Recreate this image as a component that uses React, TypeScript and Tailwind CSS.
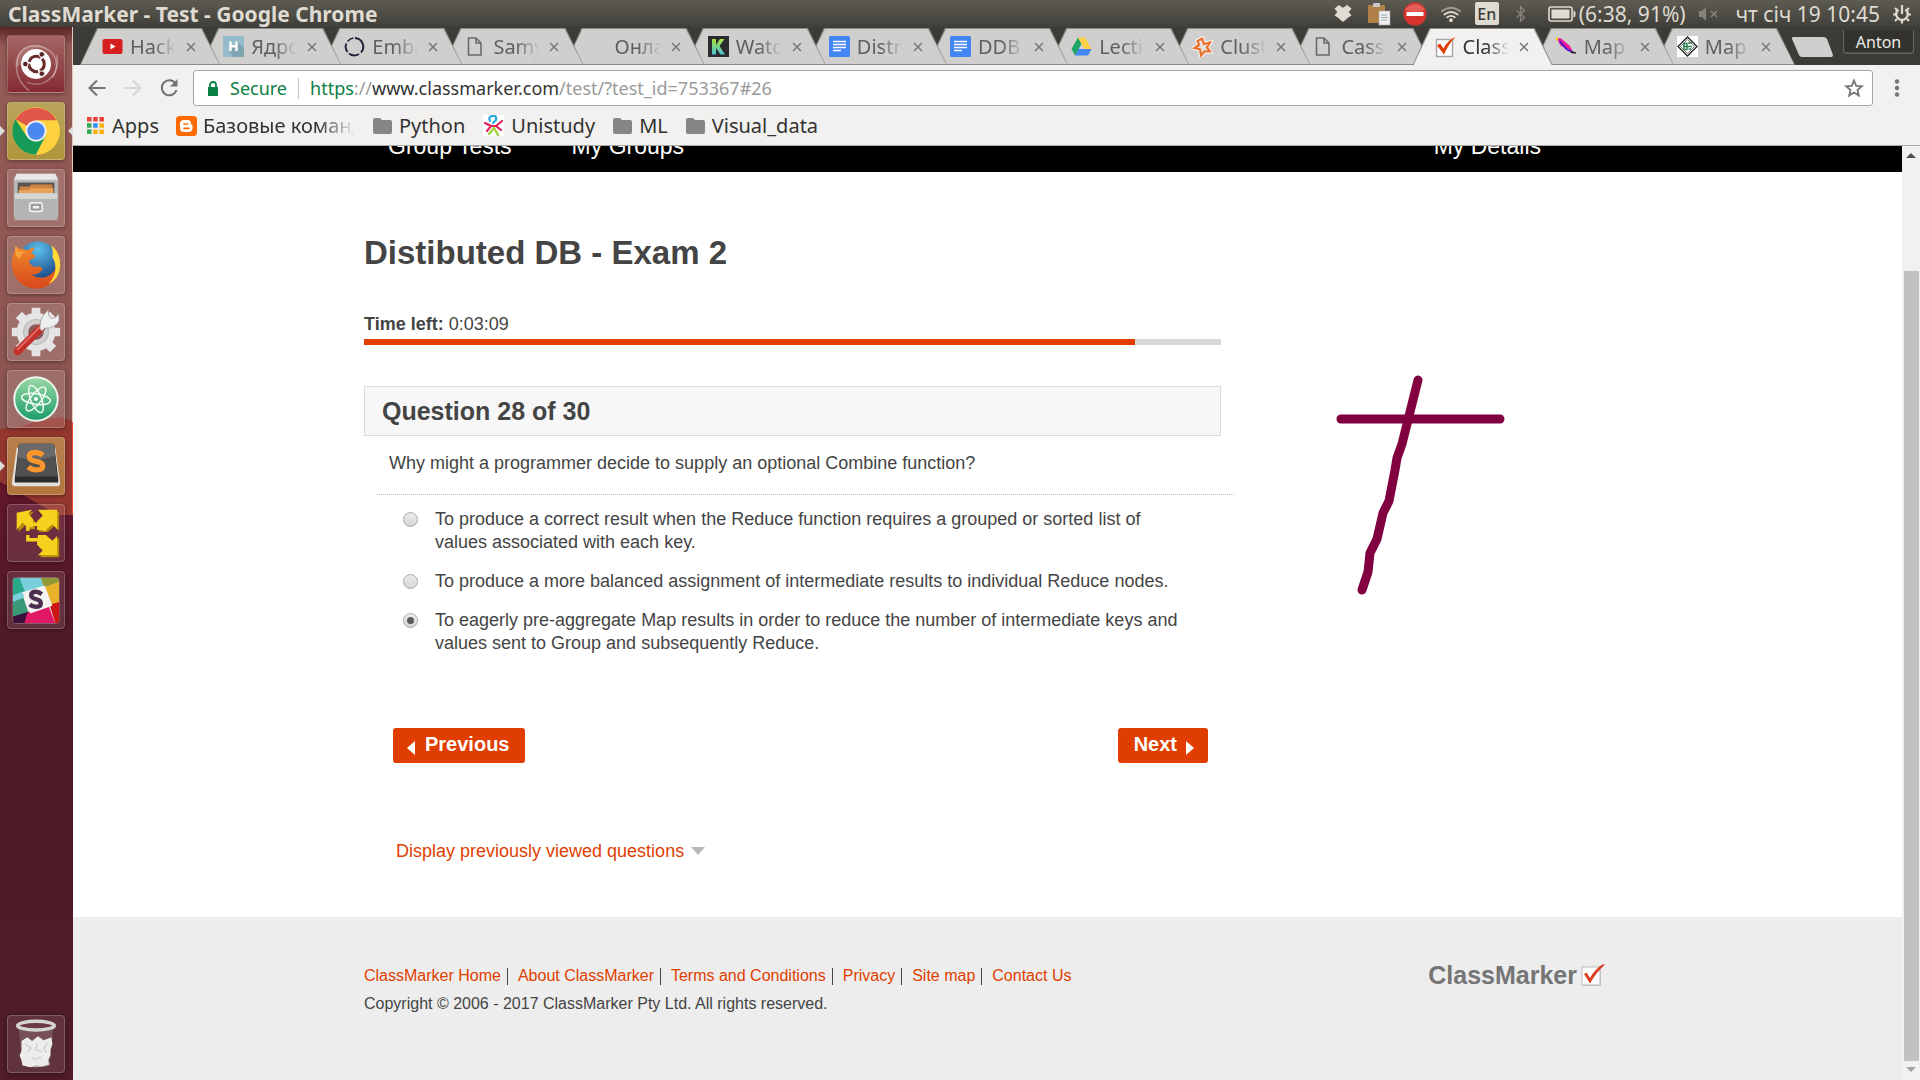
import React from "react";

const UI_FONT = "font-['Noto_Sans','Open_Sans',sans-serif]";
const PAGE_FONT = "font-['Liberation_Sans',Arial,sans-serif]";

/* ---------- favicons ---------- */

const YouTube = () => (
  <svg viewBox="0 0 21 21" className="size-[21px]">
    <rect x="0.5" y="3" width="20" height="15" rx="2" fill="#d6201f" />
    <path d="M8.500 7.500v6l5-3z" fill="#fff" />
  </svg>
);
const Habr = () => (
  <svg viewBox="0 0 21 21" className="size-[21px]">
    <rect width="21" height="21" fill="#94bccb" />
    <path d="M14 5l7 7v9H10l-3.500-6z" fill="#7fa5b3" />
    <path d="M7.500 5.500v9.500M13.500 5.500v9.500M7.500 10.200h6" stroke="#fff" strokeWidth="2.400" />
  </svg>
);
const Ring = () => (
  <svg viewBox="0 0 21 21" className="size-[21px]" fill="none" stroke="#26203a" strokeWidth="2">
    <path d="M11 2A8.700 8.700 0 0 1 17 16.500" />
    <path d="M15 18A8.700 8.700 0 0 1 5 17.500M3.500 16A8.700 8.700 0 0 1 2.300 7.500" />
    <path d="M3.500 5.500A8.700 8.700 0 0 1 9.500 2" strokeWidth="1.300" />
  </svg>
);
const FileIcon = () => (
  <svg viewBox="0 0 21 21" className="size-[21px]" fill="none" stroke="#6b6b6b" strokeWidth="1.600">
    <path d="M3.500 2h7.500l5 5v12h-12.500zM11 2v5h5" />
  </svg>
);
const Blank = () => <span className="block size-[21px]" />;
const KIcon = () => (
  <svg viewBox="0 0 21 21" className="size-[21px]">
    <defs>
      <linearGradient id="kg" x1="0" y1="0" x2="0" y2="1">
        <stop offset="0" stopColor="#a6e23a" />
        <stop offset="1" stopColor="#4cc4d8" />
      </linearGradient>
    </defs>
    <rect width="21" height="21" fill="#2b2b2f" />
    <path d="M4 3h4v6l4-6h4.500l-5 7 5.500 8.500h-4.500L8 12v6.500H4z" fill="url(#kg)" />
  </svg>
);
const Docs = () => (
  <svg viewBox="0 0 21 21" className="size-[21px]">
    <rect width="21" height="21" rx="1.500" fill="#4285f4" />
    <path d="M4 5.500h13M4 8.500h13M4 11.500h13M4 14.500h8" stroke="#fff" strokeWidth="1.500" />
  </svg>
);
const Drive = () => (
  <svg viewBox="0 0 21 21" className="size-[21px]">
    <path d="M7 1.500L0.500 13l3.500 6.500L10.500 8z" fill="#1fa463" />
    <path d="M7 1.500h7L20.500 13h-7z" fill="#ffcf44" />
    <path d="M7.500 13H20.500L17 19.500H4z" fill="#4285f4" />
  </svg>
);
const StarFav = () => (
  <svg viewBox="0 0 21 21" className="size-[21px]">
    <path d="M10 2.500l2 5.500 6-1.500-3 5 3 4-5.500 0-3.500 4-1-6-5.500-1.500 4.500-3L5.500 5z" fill="none" stroke="#fff" strokeWidth="4" />
    <path d="M10 2.500l2 5.500 6-1.500-3 5 3 4-5.500 0-3.500 4-1-6-5.500-1.500 4.500-3L5.500 5z" fill="#e6e0da" stroke="#e8702a" strokeWidth="2.200" />
  </svg>
);
const CheckFav = () => (
  <svg viewBox="0 0 21 21" className="size-[21px]">
    <rect x="1.500" y="2.500" width="16" height="17" fill="#fff" stroke="#a8a8a8" strokeWidth="1.500" />
    <path d="M2 8.500l3-2 3.500 5C11 7 15 2 20.500 0 15.500 5 12 10.500 9 17.500z" fill="#e03e00" />
  </svg>
);
const Feather = () => (
  <svg viewBox="0 0 21 21" className="size-[21px]">
    <path d="M1 2l4 .500 8.500 7 4 7-5.500-2L4 9z" fill="#f0189a" />
    <path d="M3.500 5l7 8 7 4" fill="none" stroke="#3a1bd6" strokeWidth="1.600" />
    <path d="M1 4.500V1" stroke="#e8d22a" strokeWidth="2" />
    <path d="M15 16l5 1" stroke="#222" strokeWidth="1.600" />
  </svg>
);
const DiamondFav = () => (
  <svg viewBox="0 0 21 21" className="size-[21px]">
    <rect width="21" height="21" fill="#fff" />
    <path d="M10.500 1L20 10.500 10.500 20 1 10.500z" fill="none" stroke="#222" strokeWidth="1.300" />
    <path d="M10.500 3.500l7 7-7 7-7-7z" fill="none" stroke="#555" strokeWidth=".8" />
    <path d="M7 7.500h3v6H7zM11 7h4M11.500 10.500h3.500M11.500 13h2.500M6 10.500h9" fill="none" stroke="#2d7d4f" strokeWidth="1.400" />
  </svg>
);

type Tab = { title: string; icon: React.ReactNode; active?: boolean; layer: string };
const tabs: Tab[] = [
  { title: "Hackathon", icon: <YouTube />, layer: "z-[14]" },
  { title: "Ядроид", icon: <Habr />, layer: "z-[13]" },
  { title: "Embed", icon: <Ring />, layer: "z-[12]" },
  { title: "Samyi", icon: <FileIcon />, layer: "z-[11]" },
  { title: "Онлай", icon: <Blank />, layer: "z-[10]" },
  { title: "Watch", icon: <KIcon />, layer: "z-[9]" },
  { title: "Distrib", icon: <Docs />, layer: "z-[8]" },
  { title: "DDB", icon: <Docs />, layer: "z-[7]" },
  { title: "Lectio", icon: <Drive />, layer: "z-[6]" },
  { title: "Cluste", icon: <StarFav />, layer: "z-[5]" },
  { title: "Cassa", icon: <FileIcon />, layer: "z-[4]" },
  { title: "ClassM", icon: <CheckFav />, active: true, layer: "z-[20]" },
  { title: "Map", icon: <Feather />, layer: "z-[3]" },
  { title: "Map", icon: <DiamondFav />, layer: "z-[2]" },
];

function TabItem({ tab }: { tab: Tab }) {
  const shape = "[clip-path:polygon(17px_0,calc(100%-18px)_0,100%_100%,0_100%)]";
  return (
    <div role="tab" aria-selected={!!tab.active} className={`relative -mr-[19px] h-[37px] min-w-0 flex-1 bg-[#8d8c8a] px-px pt-px last:mr-0 ${shape} ${tab.layer} ${tab.active ? "" : "pb-px"}`}>
      <div className={`flex h-full items-center pl-[21px] ${shape} ${tab.active ? "bg-[#f2f1f0]" : "bg-[#d1cfcd]"}`}>
        {tab.icon}
        <span className={`ml-[7px] w-[46px] overflow-hidden whitespace-nowrap text-xl leading-[26px] [mask-image:linear-gradient(to_right,black_50%,transparent)] ${tab.active ? "text-[#333]" : "text-[#5f5f5f]"}`}>{tab.title}</span>
        <button aria-label="Close tab" className="ml-2 shrink-0">
          <svg viewBox="0 0 14 14" className="size-[14px]" stroke="#777" strokeWidth="1.500">
            <path d="M3 3l8 8M11 3l-8 8" />
          </svg>
        </button>
      </div>
    </div>
  );
}

/* ---------- system panel ---------- */

function TopPanel() {
  return (
    <header className="flex h-[27px] shrink-0 items-center bg-linear-to-b from-[#5d5b51] to-[#403f3a] px-2 text-[21px] leading-[26px] text-[#dfdbd2]">
      <h1 className="font-bold">ClassMarker - Test - Google Chrome</h1>
      <div className="ml-auto flex items-center">
        <svg viewBox="0 0 20 20" className="h-[19px] w-5" fill="#dfdbd2">
          <path d="M5.500 1L10 4l4.500-3L19 5l-3 3.500 3 3.500-3 2-6 5-6-5-3-2 3-3.500L1 5z" />
        </svg>
        <svg viewBox="0 0 24 24" className="ml-[14px] size-6">
          <rect x="1" y="3" width="17" height="18" rx="1" fill="#b08048" />
          <rect x="6" y="1" width="7" height="4" rx="1" fill="#c9c9c9" />
          <rect x="12" y="9" width="11" height="14" fill="#eee" stroke="#aaa" strokeWidth=".6" />
          <path d="M14 13h6M14 15.500h7M14 18h6" stroke="#9aa" strokeWidth="1.200" />
        </svg>
        <svg viewBox="0 0 24 24" className="ml-3 size-6">
          <circle cx="12" cy="12" r="11.500" fill="#d8322c" />
          <path d="M2 8a11 10 0 0 1 20 0q-10 4-20 0z" fill="#e8706a" opacity=".7" />
          <rect x="3.500" y="10" width="17" height="4" fill="#fff" />
        </svg>
        <svg viewBox="0 0 24 20" className="ml-3 h-[19px] w-6" fill="none" stroke="#dfdbd2" strokeWidth="2" strokeLinecap="round">
          <path d="M2.500 7.500q9.500-7 19 0" strokeOpacity=".55" />
          <path d="M5 11q7-5 14 0M8 14q4-3 8 0" />
          <circle cx="12" cy="17" r="1" fill="#dfdbd2" />
        </svg>
        <span className="ml-3 grid h-[23px] w-6 place-items-center rounded-xs bg-[#dfdbd2] text-base font-medium leading-none text-[#3c3b37]">En</span>
        <svg viewBox="0 0 14 20" className="ml-4 h-[18px] w-3" fill="none" stroke="#85837b" strokeWidth="1.500">
          <path d="M2 6l9 8-4.500 4.500V1.500L11 6l-9 8" />
        </svg>
        <svg viewBox="0 0 28 16" className="ml-[21px] h-4 w-7">
          <rect x="1" y="1" width="23" height="14" rx="2" fill="none" stroke="#dfdbd2" strokeWidth="1.600" />
          <rect x="3.500" y="3.500" width="18" height="9" fill="#dfdbd2" />
          <path d="M25.500 4.500q2 0 2 3.500t-2 3.500z" fill="#dfdbd2" />
        </svg>
        <span className="ml-[3px]">(6:38, 91%)</span>
        <svg viewBox="0 0 22 16" className="ml-3 h-4 w-[22px]" fill="#85837b">
          <path d="M1 5h3l4-4v14l-4-4H1z" />
          <path d="M13 5l6 6M19 5l-6 6" stroke="#85837b" strokeWidth="1.600" />
        </svg>
        <span className="ml-4">чт січ 19 10:45</span>
        <svg viewBox="0 0 20 20" className="ml-3 size-5" fill="none" stroke="#dfdbd2">
          <path d="M6.500 5.500a5.800 5.800 0 1 0 7 0" strokeWidth="2.400" />
          <path d="M10 1v9" strokeWidth="2.200" />
          <path d="M1 10.500h3M16 10.500h3M3 17l2-2M17 17l-2-2M3 4l2 2M17 4l-2 2M10 16v3.500" strokeWidth="2.200" />
        </svg>
      </div>
    </header>
  );
}

/* ---------- launcher ---------- */

const ubuntuIcon = (
  <svg viewBox="0 0 58 58" className="size-full">
    <g fill="none" stroke="#fff" strokeOpacity=".35" strokeWidth="1.500">
      <path d="M10 32C6 12 30 2 46 18c6 8 5 18 0 25M22 57C6 44 6 26 14 16" />
      <path d="M50 20c6 16-10 36-30 28" />
    </g>
    <path d="M8 30C6 12 28 2 44 16 30 8 14 14 14 30z" fill="#fff" opacity=".15" />
    <circle cx="29" cy="29" r="15.500" fill="#fff" />
    <circle cx="29.500" cy="29" r="8" fill="none" stroke="#6b2a2a" strokeWidth="3.200" strokeDasharray="14.700 2" strokeDashoffset="6" />
    <g fill="#5a2226" stroke="#fff" strokeWidth="1">
      <circle cx="18" cy="29" r="2.900" />
      <circle cx="35" cy="19" r="2.900" />
      <circle cx="35" cy="39" r="2.900" />
    </g>
  </svg>
);
const chromeIcon = (
  <svg viewBox="0 0 58 58" className="size-full">
    <circle cx="29" cy="29" r="24.500" fill="#fdd23e" />
    <path d="M29 29L7.800 16.800A24.500 24.500 0 0 1 50.500 18H29z" fill="#e0574a" />
    <path d="M7.800 16.800A24.500 24.500 0 0 0 29 53.500L39 35 19 34z" fill="#159a58" />
    <path d="M51 18H29v6l10 10-10 19.500A24.500 24.500 0 0 0 51 18z" fill="#fdd23e" />
    <circle cx="29" cy="29" r="11" fill="#eef1f4" />
    <circle cx="29" cy="29" r="9" fill="#4a88f0" />
  </svg>
);
const filesIcon = (
  <svg viewBox="0 0 58 58" className="size-full">
    <path d="M9 4h40l3 6v39H6V10z" fill="#b9b9b9" />
    <path d="M9 4h40l3 6H6z" fill="#e8e8e8" />
    <rect x="10" y="13" width="38" height="14" fill="#5b5450" />
    <path d="M12 17h10l2-2h22v10H12z" fill="#cf8440" />
    <path d="M11 21h10l2-2h24v6H11z" fill="#e9a45c" />
    <path d="M7 24h44v28H7z" fill="#b4b4b4" />
    <path d="M7 24h44v6H7z" fill="#d6d6d6" />
    <rect x="22.500" y="34" width="13" height="9" rx="2" fill="#aaa" stroke="#f4f4f4" strokeWidth="1.500" />
    <rect x="25" y="36.500" width="8" height="4" fill="#eee" stroke="#888" />
  </svg>
);
const firefoxIcon = (
  <svg viewBox="0 0 58 58" className="size-full">
    <defs>
      <radialGradient id="fxb" cx=".5" cy=".2" r=".8">
        <stop offset="0" stopColor="#5cc0ec" />
        <stop offset="1" stopColor="#123a7c" />
      </radialGradient>
      <linearGradient id="fxo" x1="0" y1="0" x2="0" y2="1">
        <stop offset="0" stopColor="#f08a2c" />
        <stop offset="1" stopColor="#d9481c" />
      </linearGradient>
    </defs>
    <circle cx="31" cy="26" r="21.500" fill="url(#fxb)" />
    <path d="M8 9q3 4 7 3l5 2q4-3 8-3l-4 6q5 1 4 4l-6 3q0 6 7 7 4-2 7 2-4 7-12 6 14 8 24-4 6-8 0-18-1-6-4-9 10 6 10 20A25 25 0 0 1 4 29Q4 19 7 15z" fill="url(#fxo)" />
    <path d="M45 9q10 8 9 22-1 12-12 18 8-9 7-18 0-6-3-10 1-6-1-12z" fill="#ffd83c" />
    <path d="M8 9l3 6 8 0q-6 2-7 8-6-4-4-14z" fill="#f9a13b" />
  </svg>
);
const toolsIcon = (
  <svg viewBox="0 0 58 58" className="size-full">
    <g fill="#e4e4e4">
      <circle cx="29" cy="29" r="20" />
      <g stroke="#e4e4e4" strokeWidth="9">
        <path d="M29 4v50M4 29h50M11.300 11.300l35.400 35.400M46.700 11.300L11.300 46.700" />
      </g>
    </g>
    <circle cx="29" cy="29" r="13" fill="#d0d0d0" stroke="#b5b5b5" />
    <circle cx="29" cy="29" r="8" fill="#8c5a56" />
    <path d="M10 49L35 24" stroke="#c2302c" strokeWidth="8" strokeLinecap="round" />
    <path d="M10 47L33 24" stroke="#e86a62" strokeWidth="2" strokeLinecap="round" />
    <path d="M33 25q0-9 5-15l4-4q-1 7 3 9 5 0 7-5 3 8-3 12-5 4-11 3l-3 3z" fill="#efefef" stroke="#999" strokeWidth=".8" />
  </svg>
);
const atomIcon = (
  <svg viewBox="0 0 58 58" className="size-full">
    <defs>
      <linearGradient id="atg" x1="0" y1="0" x2="0" y2="1">
        <stop offset="0" stopColor="#9ad9a4" />
        <stop offset="1" stopColor="#189c6a" />
      </linearGradient>
    </defs>
    <circle cx="29" cy="29" r="22.500" fill="url(#atg)" stroke="#eef5ef" strokeWidth="2" />
    <g fill="none" stroke="#effaf2" strokeWidth="1.600">
      <ellipse cx="29" cy="29" rx="15" ry="5.500" transform="rotate(8 29 29)" />
      <ellipse cx="29" cy="29" rx="15" ry="5.500" transform="rotate(68 29 29)" />
      <ellipse cx="29" cy="29" rx="15" ry="5.500" transform="rotate(128 29 29)" />
    </g>
    <circle cx="29" cy="29" r="2" fill="#fff" />
  </svg>
);
const sublimeIcon = (
  <svg viewBox="0 0 58 58" className="size-full">
    <path d="M9 10h40l5 36q0 4-3 4H7q-3 0-3-4z" fill="#e4e0da" />
    <path d="M11 8q0-2 3-2h31q3 0 3 2l4 34v4H7v-4z" fill="#2c2c2c" />
    <path d="M11 8q0-2 3-2h31q3 0 3 2l3 32H8z" fill="#505050" />
    <path d="M14 6h31q3 0 3 2l1 10Q30 26 10 20l1-12q0-2 3-2z" fill="#7a7a7a" opacity=".6" />
    <path d="M36 18q-3-3-8-3-6 0-6 4.500 0 3.500 6 4.500 8 1 8 5t-7 4q-5 0-8-3" fill="none" stroke="#fa962c" strokeWidth="5.500" />
  </svg>
);
const arrowsIcon = (
  <svg viewBox="0 0 58 58" className="size-full">
    <g fill="#b58a08" transform="translate(2 2)">
      <path d="M9 8l16-3-4 4 5 6v8h-6l-3-5-8 8z" />
      <path d="M31 5h20v20l-5-5-7 6h-9v-9l6-6z" />
      <path d="M31 31h8l7 6 5-5v20H31l5-5-6-6z" />
    </g>
    <g fill="#f6d21f">
      <path d="M9 8l16-3-4 4 5 6v8h-6l-5-5-6 8z" />
      <path d="M31 5h20v20l-5-5-7 6h-9v-9l6-6z" />
      <path d="M31 31h8l7 6 5-5v20H31l5-5-6-6z" />
    </g>
    <path d="M26 20h5M26 36h5M20.500 20v7M38 25v2M38 31v3M20.500 31v5h7" fill="none" stroke="#f6d21f" strokeWidth="3.500" />
  </svg>
);
const slackIcon = (
  <svg viewBox="0 0 58 58" className="size-full">
    <clipPath id="slc"><rect x="5" y="6" width="48" height="47" rx="3" /></clipPath>
    <g clipPath="url(#slc)">
      <rect width="58" height="58" fill="#f5f2f2" />
      <path d="M5 6h9l6 15-15 6z" fill="#2aa88c" />
      <path d="M12 6h22l3 9-19 7z" fill="#79cfdc" />
      <path d="M34 6h19v5l-16 5z" fill="#8f9a36" />
      <path d="M37 16l16-6v22l-9 3z" fill="#e8b228" />
      <path d="M5 27l10-3 7 20-17 6z" fill="#3a9a78" />
      <path d="M5 46l17-5v12H5z" fill="#3a0f3c" />
      <path d="M20 42l22-7 7 18H17z" fill="#e01765" />
      <path d="M43 34l10-3v22h-4z" fill="#cc1414" />
      <path d="M5 24l11-4 2 6-13 5z" fill="#79cfdc" />
      <path d="M15 21l23-7 8 21-23 8z" fill="#f5f2f2" />
    </g>
    <path d="M35 23q-3-2.500-6-2.500-5 0-5 3.500 0 3 5 4t5 4.500-5.500 3.500q-3.500 0-6-2.500" fill="none" stroke="#4c2f4f" strokeWidth="4.500" />
  </svg>
);
const trashIcon = (
  <svg viewBox="0 0 58 58" className="size-full">
    <path d="M11 12h36l-4 38q-14 5-28 0z" fill="#fff" fillOpacity=".14" />
    <path d="M15 48q14 6 28 0l0 3q-14 4-28 0z" fill="#b9b9ae" />
    <path d="M14 26l6-4 5 4 6-5 6 4 8-3 1 7-2 6 0 6-2 4 0 5-7 2-6-1-6 2-8-2-1-5-2-5 2-5z" fill="#ececec" />
    <path d="M18 29l6 4-4 5M30 28l-1 7 6 2M41 28l-4 5 3 5M24 43l5 2 5-3" fill="none" stroke="#c9c9c9" strokeWidth="1.200" />
    <ellipse cx="29" cy="10" rx="19" ry="4.500" fill="#6b3a42" stroke="#d4d6cf" strokeWidth="3.500" />
  </svg>
);

const plainTile = "bg-white/15";
const apps = [
  { name: "Search your computer", icon: ubuntuIcon, tile: "bg-linear-to-b from-[#a36765] to-[#842a33]" },
  { name: "Google Chrome", icon: chromeIcon, tile: "bg-linear-to-b from-[#b8a45c] to-[#b0963a]", left: true, right: true },
  { name: "Files", icon: filesIcon, tile: plainTile },
  { name: "Firefox", icon: firefoxIcon, tile: plainTile },
  { name: "System Settings", icon: toolsIcon, tile: plainTile },
  { name: "Atom", icon: atomIcon, tile: plainTile },
  { name: "Sublime Text", icon: sublimeIcon, tile: "bg-linear-to-b from-[#b97f4c] to-[#b2763c]", left: true },
  { name: "VMware", icon: arrowsIcon, tile: "bg-white/10" },
  { name: "Slack", icon: slackIcon, tile: "bg-white/10" },
];

function LauncherItem({ name, icon, tile, left, right }: { name: string; icon: React.ReactNode; tile: string; left?: boolean; right?: boolean }) {
  return (
    <div className="relative flex pl-[7px]">
      {left && <span className="absolute top-1/2 left-0 -mt-[5px] border-y-[5px] border-l-[5px] border-y-transparent border-l-[#dedede]" />}
      <button aria-label={name} className={`size-[58px] overflow-hidden rounded-[4px] border border-white/20 shadow-[0_1px_4px_rgba(0,0,0,0.4)] ${tile}`}>{icon}</button>
      {right && <span className="absolute top-1/2 right-0 -mt-[5px] border-y-[5px] border-r-[5px] border-y-transparent border-r-[#dedede]" />}
    </div>
  );
}

function Launcher() {
  return (
    <aside className="relative flex w-[73px] shrink-0 flex-col bg-[#8f5853] pt-2 pb-[7px]">
      <svg viewBox="0 0 73 1053" preserveAspectRatio="none" className="absolute inset-0 size-full">
        <defs>
          <linearGradient id="lg1" x1="0" y1="0" x2="0" y2="1">
            <stop offset="0" stopColor="#5a2320" />
            <stop offset=".04" stopColor="#955c57" />
            <stop offset="1" stopColor="#8a524e" />
          </linearGradient>
          <linearGradient id="lg2" x1="0" y1="0" x2="0" y2="1">
            <stop offset="0" stopColor="#63162b" />
            <stop offset=".3" stopColor="#4c1a27" />
            <stop offset="1" stopColor="#4f1c28" />
          </linearGradient>
        </defs>
        <rect width="73" height="460" fill="url(#lg1)" />
        <path d="M0 402L20 400 40 393 60 390 73 394V490H0z" fill="#95372f" />
        <path d="M0 455L14 462 40 478 60 488 73 488V1053H0z" fill="url(#lg2)" />
        <path d="M72.500 0V395" stroke="#eac7bd" />
        <path d="M72.500 395V488" stroke="#e6493a" />
      </svg>
      <nav aria-label="Launcher" className="flex flex-1 flex-col gap-[9px]">
        {apps.map((a) => <LauncherItem key={a.name} {...a} />)}
        <div className="mt-auto"><LauncherItem name="Trash" icon={trashIcon} tile="bg-white/10" /></div>
      </nav>
    </aside>
  );
}

/* ---------- browser chrome ---------- */

const Folder = () => (
  <svg viewBox="0 0 19 16" className="h-4 w-[19px]" fill="#858585">
    <path d="M0 2q0-2 2-2h5l2 2h8q2 0 2 2v10q0 2-2 2H2q-2 0-2-2z" />
  </svg>
);
const AppsGrid = () => (
  <svg viewBox="0 0 17 17" className="size-[17px]">
    <path d="M0 0h4.500v4.500H0zM6.200 0h4.500v4.500H6.200zM12.400 0h4.500v4.500h-4.500z" fill="#ea4335" />
    <path d="M0 6.200h4.500v4.500H0z" fill="#34a853" />
    <path d="M6.200 6.200h4.500v4.500H6.200z" fill="#2f8ff0" />
    <path d="M12.400 6.200h4.500v4.500h-4.500zM6.200 12.400h4.500v4.500H6.200zM12.400 12.400h4.500v4.500h-4.500z" fill="#fbaf0a" />
    <path d="M0 12.400h4.500v4.500H0z" fill="#34a853" />
  </svg>
);
const Blogger = () => (
  <svg viewBox="0 0 21 20" className="h-5 w-[21px]">
    <rect width="21" height="20" rx="3.500" fill="#ff6a00" />
    <path d="M8 4h3.500q3.500 0 3.500 3.500 0 1.500 1.500 1.500v3q0 4-4 4H8q-4 0-4-4V8Q4 4 8 4z" fill="#fff" />
    <path d="M8 8h3.500M8 12.300h5" stroke="#ff6a00" strokeWidth="1.700" strokeLinecap="round" />
  </svg>
);
const Unistudy = () => (
  <svg viewBox="0 0 21 21" className="size-[21px]" fill="none" strokeWidth="2.200" strokeLinecap="round">
    <rect width="21" height="21" fill="#fff" />
    <path d="M7 6q-2-4 2-5 5-1 4 4l-3 3" stroke="#27a9e0" />
    <path d="M2 8l6 3-4 5M19 6l-6 5 5 4" stroke="#e0245e" />
    <path d="M6 19l5-6 4 7" stroke="#a6ce39" />
    <path d="M8 11h5" stroke="#e0245e" />
  </svg>
);

const bookmarks = [
  { label: "Apps", icon: <AppsGrid />, text: "ml-2", gap: "" },
  { label: "Базовые команды", icon: <Blogger />, text: "ml-1.5 w-[152px] overflow-hidden [mask-image:linear-gradient(to_right,black_75%,transparent)]", gap: "ml-[17px]" },
  { label: "Python", icon: <Folder />, text: "ml-[7px]", gap: "ml-[18px]" },
  { label: "Unistudy", icon: <Unistudy />, text: "ml-[7px]", gap: "ml-[18px]" },
  { label: "ML", icon: <Folder />, text: "ml-[7px]", gap: "ml-[18px]" },
  { label: "Visual_data", icon: <Folder />, text: "ml-[7px]", gap: "ml-[18px]" },
];

function BrowserChrome() {
  return (
    <div className="shrink-0">
      <div className="flex h-[38px] bg-[#3c3b37] pt-px pl-[7px]">
        <div role="tablist" className="flex min-w-0 flex-1">
          {tabs.map((t, i) => <TabItem key={i} tab={t} />)}
        </div>
        <button aria-label="New tab" className="mt-[9px] -ml-[3px] h-5 w-[42px]">
          <svg viewBox="0 0 42 20" className="h-full w-full">
            <path d="M1 0h30q3 0 4 2l6 16q0 2-2 2H10q-2 0-3-2L0 2q0-2 1-2z" fill="#d1cfcd" />
          </svg>
        </button>
        <button className="mt-0.5 mr-1.5 ml-[9px] h-6 w-[71px] rounded-b-[4px] border border-t-0 border-[#66655f] bg-[#33322f] text-base leading-5 text-[#eceae6] shadow-[inset_0_-1px_0_#4d4c47]">Anton</button>
      </div>
      <div className="border-b border-[#a9a9a7] bg-[#f2f1f0]">
        <div className="flex items-center pt-[5px] pr-5 pl-[14px]">
          <button aria-label="Back"><svg viewBox="0 0 20 18" className="h-[18px] w-5" fill="none" stroke="#737373" strokeWidth="2"><path d="M18.500 9H2.500M10 1.500L2.500 9l7.500 7.500" /></svg></button>
          <button aria-label="Forward" className="ml-4"><svg viewBox="0 0 20 18" className="h-[18px] w-5" fill="none" stroke="#d6d5d4" strokeWidth="2"><path d="M1.500 9h16M10 1.500L17.500 9 10 16.500" /></svg></button>
          <button aria-label="Reload" className="ml-4"><svg viewBox="0 0 20 20" className="size-5" fill="none" stroke="#737373" strokeWidth="2"><path d="M16.500 5.500A7.500 7.500 0 1 0 17.500 12" /><path d="M18.500 1v7.500H11z" fill="#737373" stroke="none" /></svg></button>
          <div className="ml-3.5 flex h-9 min-w-0 flex-1 items-center rounded-[3px] border border-[#a6a6a6] bg-white pr-2 pl-[13px] text-lg leading-6">
            <svg viewBox="0 0 12 15" className="h-[15px] w-3" fill="#0b8043"><path d="M1 6h10v9H1z" /><path d="M3 6.500V4a3 3 0 0 1 6 0v2.500" fill="none" stroke="#0b8043" strokeWidth="1.800" /></svg>
            <span className="ml-[11px] text-[#0b8043]">Secure</span>
            <span className="ml-[11px] h-[21px] w-px bg-[#c4c4c4]" />
            <div className="ml-[11px] flex-1 truncate text-[#9a9a9a]"><span className="text-[#0b8043]">https</span>://<span className="text-[#333]">www.classmarker.com</span>/test/?test_id=753367#26</div>
            <button aria-label="Bookmark this page"><svg viewBox="0 0 20 20" className="size-5" fill="none" stroke="#757575" strokeWidth="1.800"><path d="M10 2.500l2.200 5.300 5.600.5-4.300 3.700 1.300 5.600-4.800-3-4.800 3 1.300-5.600L2.200 8.300l5.600-.5z" /></svg></button>
          </div>
          <button aria-label="Menu" className="ml-[21px]"><svg viewBox="0 0 6 18" className="h-[18px] w-1.5" fill="#757575"><circle cx="3" cy="2.500" r="2.200" /><circle cx="3" cy="9" r="2.200" /><circle cx="3" cy="15.500" r="2.200" /></svg></button>
        </div>
        <div className="flex h-[39px] items-center pl-[14px] text-xl leading-[26px] text-[#333]">
          {bookmarks.map((b) => (
            <a key={b.label} href="#" className={`flex items-center whitespace-nowrap ${b.gap}`}>
              {b.icon}
              <span className={b.text}>{b.label}</span>
            </a>
          ))}
        </div>
      </div>
    </div>
  );
}

/* ---------- page ---------- */

const options = [
  "To produce a correct result when the Reduce function requires a grouped or sorted list of values associated with each key.",
  "To produce a more balanced assignment of intermediate results to individual Reduce nodes.",
  "To eagerly pre-aggregate Map results in order to reduce the number of intermediate keys and values sent to Group and subsequently Reduce.",
];
const footerLinks = ["ClassMarker Home", "About ClassMarker", "Terms and Conditions", "Privacy", "Site map", "Contact Us"];

function Page() {
  return (
    <div className={`flex min-w-0 flex-1 flex-col bg-white text-[#444] ${PAGE_FONT}`}>
      <div className="h-[26px] shrink-0 overflow-hidden bg-black">
        <nav className="mx-auto flex h-full max-w-[1247px] items-end pb-[14px] pl-6 text-[23px] leading-6 text-white">
          <a href="#">Group Tests</a>
          <a href="#" className="ml-[60px]">My Groups</a>
          <a href="#" className="mr-[70px] ml-auto">My Details</a>
        </nav>
      </div>
      <main className="relative mx-auto w-full max-w-[1247px] pt-[61px] text-lg leading-6">
        <div className="w-[857px]">
          <h2 className="text-[33px] leading-10 font-bold">Distibuted DB - Exam 2</h2>
          <p className="mt-[39px]"><b>Time left:</b> 0:03:09</p>
          <div className="mt-[3px] h-1.5 bg-[#d8d8d8]">
            <div className="h-full w-[90%] bg-[#e03e00]" />
          </div>
          <h3 className="mt-[41px] flex h-[50px] items-center border border-[#dadada] bg-[#f7f7f7] pl-[17px] text-[25px] leading-[30px] font-bold">Question 28 of 30</h3>
          <p className="mt-[15px] pl-[25px]">Why might a programmer decide to supply an optional Combine function?</p>
          <fieldset className="mt-[19px] -mr-[13px] ml-[13px] flex flex-col gap-4 border-t border-dotted border-[#bbb] pt-[13px] pl-[26px]">
            {options.map((o, i) => (
              <label key={i} className="flex leading-[23px]">
                <input
                  type="radio"
                  name="answer"
                  defaultChecked={i === 2}
                  className="mt-1 grid size-[15px] shrink-0 appearance-none place-items-center rounded-full border border-[#a9a9a9] bg-linear-to-b from-[#ececec] to-[#d6d6d6] before:size-[7px] before:rounded-full before:content-[''] checked:before:bg-[#5a5a5a]"
                />
                <span className="ml-[17px] max-w-[750px]">{o}</span>
              </label>
            ))}
          </fieldset>
          <div className="mt-[73px] flex justify-between pr-[13px] pl-[29px] text-xl leading-[23px] font-bold text-white">
            <button className="flex h-[35px] items-center gap-2.5 rounded-[3px] bg-[#e03e00] pr-4 pl-[14px]">
              <svg viewBox="0 0 8 14" className="mt-1 h-3.5 w-2" fill="#fff"><path d="M8 0v14L0 7z" /></svg>
              <span className="pb-[3px]">Previous</span>
            </button>
            <button className="flex h-[35px] items-center gap-[9px] rounded-[3px] bg-[#e03e00] pr-[14px] pl-4">
              <span className="pb-[3px]">Next</span>
              <svg viewBox="0 0 8 14" className="mt-1 h-3.5 w-2" fill="#fff"><path d="M0 0v14l8-7z" /></svg>
            </button>
          </div>
          <a href="#" className="mt-[76px] ml-8 flex items-center text-[#e03e00]">
            Display previously viewed questions
            <svg viewBox="0 0 14 8" className="ml-[7px] h-2 w-3.5" fill="#b8b8b8"><path d="M0 0h14L7 8z" /></svg>
          </a>
        </div>
        <svg viewBox="0 0 170 222" className="absolute top-[202px] left-[972px] h-[222px] w-[170px]" fill="none" stroke="#800040" strokeWidth="9" strokeLinecap="round" strokeLinejoin="round">
          <path d="M5 45h159" />
          <path d="M82 6L71 50 66 70 61 84 59 96 53 127 47 139 41 165 34 179 32 198 26 216" />
        </svg>
      </main>
      <footer className="mt-[54px] flex-1 bg-[#ededed]">
        <div className="mx-auto flex max-w-[1247px] items-start pt-[49px] text-base leading-5">
          <div>
            <ul className="flex">
              {footerLinks.map((l, i) => (
                <li key={l} className={i < footerLinks.length - 1 ? "mr-2.5 flex" : "flex"}>
                  <a href="#" className="text-[#e03e00]">{l}</a>
                  {i < footerLinks.length - 1 && <span className="mt-0.5 ml-1.5 h-[17px] w-px bg-[#444]" />}
                </li>
              ))}
            </ul>
            <p className="mt-2">Copyright © 2006 - 2017 ClassMarker Pty Ltd. All rights reserved.</p>
          </div>
          <a href="#" className="-mt-1.5 mr-1.5 ml-auto flex items-center text-[25px] leading-[30px] font-bold text-[#757575]">
            ClassMarker
            <svg viewBox="0 0 24 25" className="ml-1 h-[25px] w-6">
              <rect x="2" y="5" width="18" height="18" fill="#bbb" />
              <rect x="1" y="4" width="18" height="18" fill="#fff" stroke="#c4c4c4" strokeWidth="1.200" />
              <path d="M3 11l2.500-1.500L9 15C12 9 17 4 22.500 1l1 1C18 7 13 13 9 20.500z" fill="#dc3c1e" />
            </svg>
          </a>
        </div>
      </footer>
    </div>
  );
}

function Scrollbar() {
  return (
    <div aria-hidden="true" className="flex w-[18px] shrink-0 flex-col items-center bg-[#f1f1f1]">
      <span className="mt-[7px] border-x-[5px] border-b-[5px] border-x-transparent border-b-[#505050]" />
      <span className="mt-[113px] w-[15px] flex-1 bg-[#c1c1c1]" />
      <span className="mt-1.5 mb-2 border-x-[5px] border-t-[5px] border-x-transparent border-t-[#a3a3a3]" />
    </div>
  );
}

export default function App() {
  return (
    <div className={`flex h-screen flex-col overflow-hidden ${UI_FONT}`}>
      <TopPanel />
      <div className="flex min-h-0 flex-1">
        <Launcher />
        <div className="flex min-w-0 flex-1 flex-col">
          <BrowserChrome />
          <div className="flex min-h-0 flex-1">
            <Page />
            <Scrollbar />
          </div>
        </div>
      </div>
    </div>
  );
}
